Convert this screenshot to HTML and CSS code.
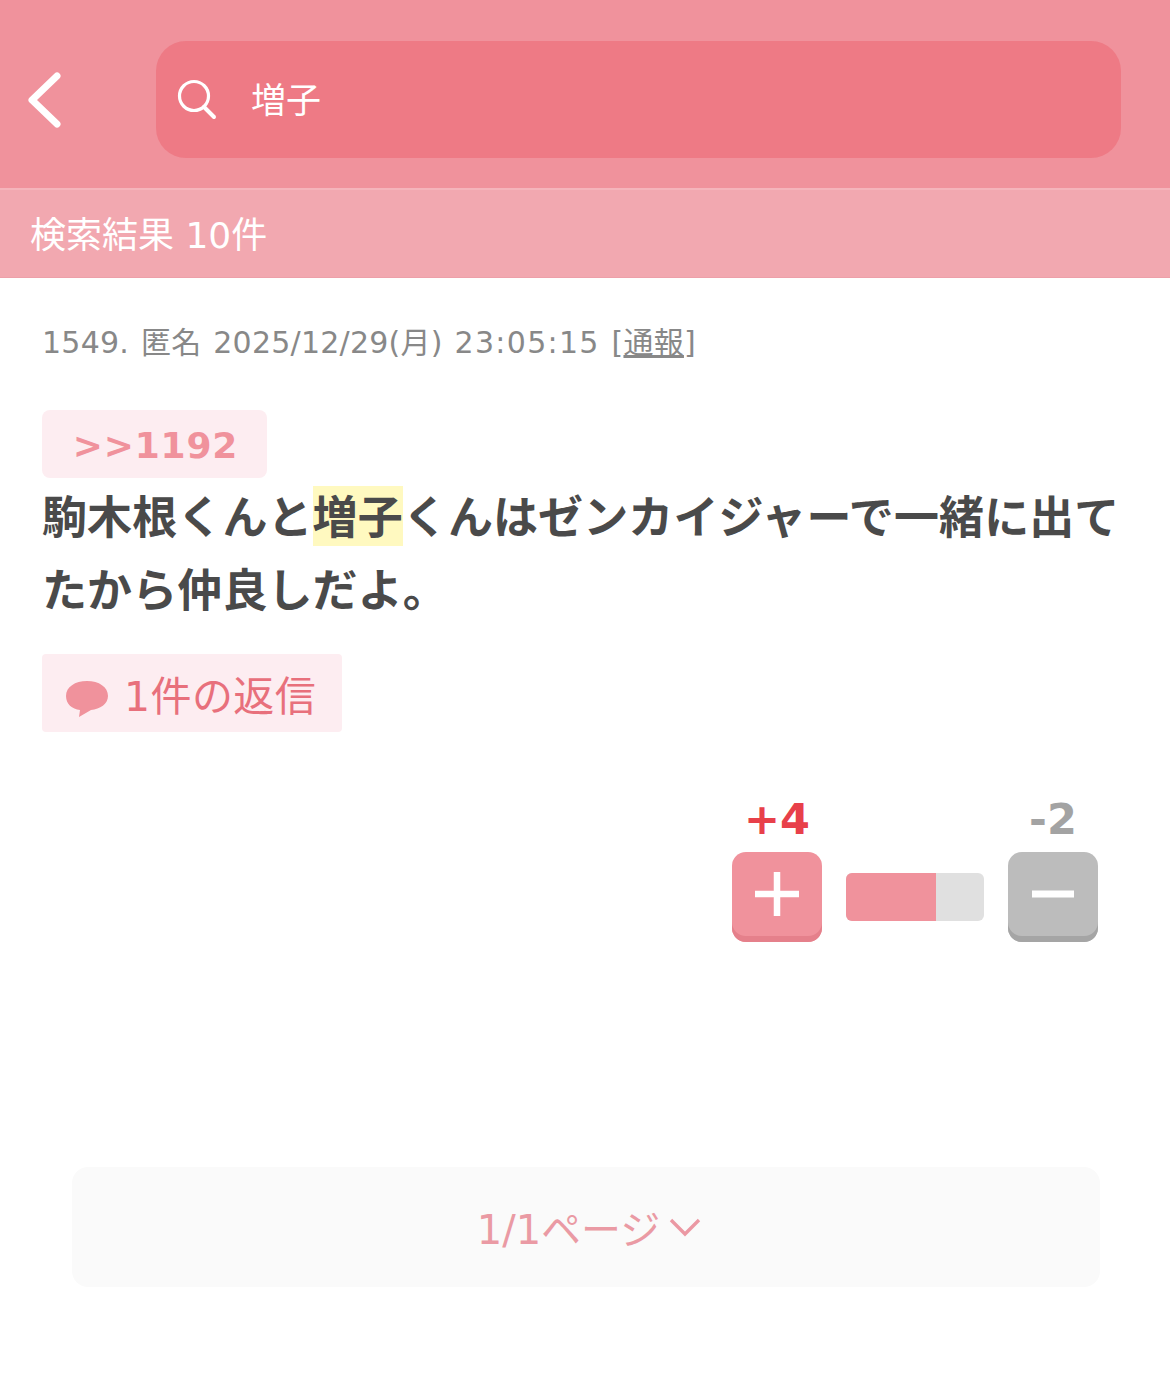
FILE: index.html
```html
<!DOCTYPE html>
<html lang="ja">
<head>
    <meta charset="UTF-8">
    <meta name="viewport" content="width=device-width, initial-scale=1.0">
    <title>検索結果</title>
    <link rel="stylesheet" href="styles.css">
</head>
<body>

    <!-- Search header -->
    <header class="search-bar">
        <a class="back" href="#">
            <svg width="38" height="60" viewBox="0 0 38 60"><path d="M31 6 L6 30 L31 54" fill="none" stroke="#fff" stroke-width="7" stroke-linecap="round" stroke-linejoin="round"/></svg>
        </a>
        <div class="search-box">
            <svg class="search-icon" width="40" height="42" viewBox="0 0 40 42"><circle cx="17" cy="17" r="14.5" fill="none" stroke="#fff" stroke-width="3.2"/><path d="M27 28 L37 38" fill="none" stroke="#fff" stroke-width="4" stroke-linecap="round"/></svg>
            <span class="search-word">増子</span>
        </div>
    </header>
    <div class="result-count">検索結果 10件</div>

    <!-- Post -->
    <main class="post">
        <p class="post-meta">1549. 匿名 2025/12/29(月) <span class="post-time">23:05:15</span> [<a href="#">通報</a>]</p>
        <a class="anchor" href="#">&gt;&gt;1192</a>
        <p class="post-body">駒木根くんと<mark>増子</mark>くんはゼンカイジャーで一緒に出てたから仲良しだよ。</p>
        <a class="reply-btn" href="#">
            <svg width="42" height="38" viewBox="0 0 42 38"><path d="M21 1 C33 1 42 7 42 16 C42 24 34 29 25 30 L13 37 L14 30 C6 29 0 24 0 16 C0 7 9 1 21 1 Z" fill="#f0929c"/></svg>
            <span>1件の返信</span>
        </a>

        <div class="votes">
            <div class="vote">
                <span class="vote-count plus">+4</span>
                <button class="vote-btn plus-btn"><svg width="44" height="44" viewBox="0 0 44 44"><path d="M22 0 V44 M0 22 H44" stroke="#fff" stroke-width="6.5"/></svg></button>
            </div>
            <div class="vote-bar"><div class="vote-fill" style="width: 65.2%"></div></div>
            <div class="vote">
                <span class="vote-count minus">-2</span>
                <button class="vote-btn minus-btn"><svg width="44" height="44" viewBox="0 0 44 44"><path d="M1 22 H43" stroke="#fff" stroke-width="7"/></svg></button>
            </div>
        </div>
    </main>

    <!-- Pager -->
    <div class="pager">
        <span>1/1ページ</span>
        <svg width="32" height="20" viewBox="0 0 32 20"><path d="M2 3 L16 17 L30 3" fill="none" stroke="#eb98a3" stroke-width="3.4"/></svg>
    </div>

</body>
</html>
```

FILE: styles.css
```css
/* Reset default styles */
* {
    margin: 0;
    padding: 0;
    box-sizing: border-box;
}

body {
    font-family: "DejaVu Sans", "Noto Sans CJK JP", sans-serif;
    background-color: #fff;
    color: #4a4a4a;
}

a {
    text-decoration: none;
}

/* Header */
.search-bar {
    height: 188px;
    background-color: #f0929c;
    padding: 41px 49px 30px 26px;
    display: flex;
    align-items: stretch;
}

.back {
    width: 130px;
    display: flex;
    align-items: center;
}

.search-box {
    flex: 1;
    background-color: #ee7a85;
    border-radius: 30px;
    padding-left: 21px;
    display: flex;
    align-items: center;
}

.search-word {
    margin-left: 34px;
    margin-bottom: 4px;
    font-size: 35px;
    color: #fff;
}

.result-count {
    height: 90px;
    background-color: #f2a8b0;
    border-top: 2px solid #f5b4bb;
    border-bottom: 1px solid #eda0a9;
    padding-left: 30px;
    font-size: 36px;
    line-height: 92px;
    color: #fff;
}

/* Post */
.post {
    padding: 43px 42px 0;
    height: 889px;
}

.post-meta {
    font-size: 30px;
    line-height: 44px;
    letter-spacing: 0.25px;
    word-spacing: 2px;
    color: #888;
    margin-bottom: 45px;
}

.post-time {
    letter-spacing: 1.3px;
}

.post-meta a {
    color: #888;
    text-decoration: underline;
}

.anchor {
    display: block;
    width: 225px;
    height: 68px;
    padding-left: 2px;
    background-color: #fdedf1;
    border-radius: 8px;
    font-size: 36px;
    font-weight: bold;
    line-height: 71px;
    text-align: center;
    letter-spacing: 0.8px;
    color: #f0929c;
}

.post-body {
    font-size: 45px;
    font-weight: bold;
    line-height: 73px;
    letter-spacing: 0.1px;
    margin-top: 4px;
}

.post-body mark {
    background-color: #fff9c0;
    color: inherit;
    padding: 6px 0 1px;
}

.reply-btn {
    display: inline-flex;
    align-items: center;
    gap: 16px;
    height: 78px;
    width: 300px;
    margin-top: 26px;
    padding-left: 24px;
    background-color: #fdedf1;
    border-radius: 4px;
    font-size: 41px;
    letter-spacing: 0.4px;
    color: #e8707c;
}

.reply-btn svg {
    margin-top: 11px;
}

/* Votes */
.votes {
    display: flex;
    justify-content: flex-end;
    align-items: flex-end;
    gap: 24px;
    margin-top: 60px;
    padding-right: 30px;
}

.vote {
    width: 90px;
    display: flex;
    flex-direction: column;
    align-items: center;
}

.vote-count {
    font-size: 43px;
    font-weight: bold;
    line-height: 54px;
    padding-bottom: 6px;
}

.vote-count.plus {
    color: #e8404a;
}

.vote-count.minus {
    color: #a3a3a3;
}

.vote-btn {
    width: 90px;
    height: 90px;
    border: none;
    border-radius: 14px;
    display: flex;
    align-items: center;
    justify-content: center;
}

.plus-btn {
    background-color: #f0929c;
    box-shadow: inset 0 -6px 0 #e5808b;
}

.minus-btn {
    background-color: #bcbcbc;
    box-shadow: inset 0 -6px 0 #a5a5a5;
}

.vote-btn svg {
    margin-bottom: 6px;
}

.vote-bar {
    width: 138px;
    height: 48px;
    margin-bottom: 21px;
    background-color: #e0e0e0;
    border-radius: 6px;
    overflow: hidden;
}

.vote-fill {
    height: 100%;
    background-color: #f0929c;
}

/* Pager */
.pager {
    width: 1028px;
    height: 120px;
    margin-left: 72px;
    padding-left: 6px;
    background-color: #fafafa;
    border-radius: 16px;
    display: flex;
    align-items: center;
    justify-content: center;
    gap: 9px;
    font-size: 40px;
    color: #ea9aa4;
}
```
